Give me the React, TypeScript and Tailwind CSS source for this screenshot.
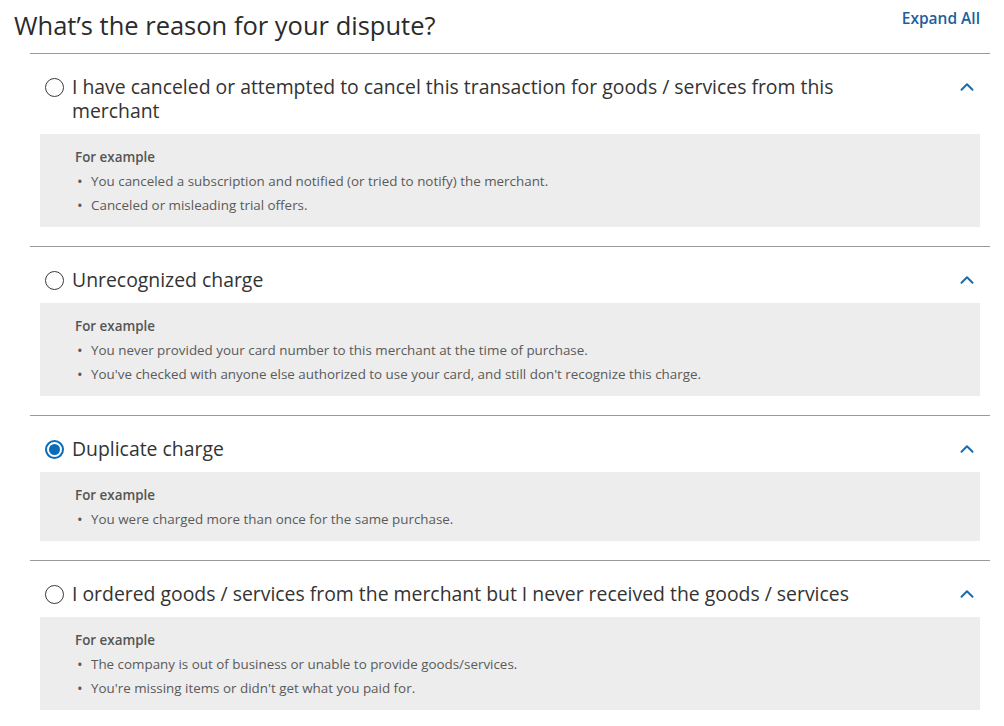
import { ChevronUp } from "lucide-react";

const reasons = [
  {
    title:
      "I have canceled or attempted to cancel this transaction for goods / services from this merchant",
    examples: [
      "You canceled a subscription and notified (or tried to notify) the merchant.",
      "Canceled or misleading trial offers.",
    ],
  },
  {
    title: "Unrecognized charge",
    examples: [
      "You never provided your card number to this merchant at the time of purchase.",
      "You've checked with anyone else authorized to use your card, and still don't recognize this charge.",
    ],
  },
  {
    title: "Duplicate charge",
    selected: true,
    examples: ["You were charged more than once for the same purchase."],
  },
  {
    title: "I ordered goods / services from the merchant but I never received the goods / services",
    examples: [
      "The company is out of business or unable to provide goods/services.",
      "You're missing items or didn't get what you paid for.",
    ],
  },
];

export default function App() {
  return (
    <div className="h-screen overflow-hidden bg-white font-['Open_Sans',sans-serif] text-[#333]">
      {/* Header */}
      <div className="flex items-start justify-between pl-[14px] pr-[24px] pt-[9px]">
        <h1 className="text-[25.5px] leading-[32px] text-[#2b2b2b]">What’s the reason for your dispute?</h1>
        <button className="-mt-[2px] text-[15.5px] font-semibold text-[#1b5f9e]">Expand All</button>
      </div>

      <div className="ml-[30px] mr-[14px] mt-[12px] border-t border-[#9a9a9a]">
        {reasons.map((r, i) => (
          <div key={i} className="border-b border-[#9a9a9a] pt-[21px] pb-[19px]">
            <div className="flex items-start pl-[15px] pr-[12px]">
              <span className="mt-[3px] flex h-[19px] w-[19px] shrink-0 items-center justify-center rounded-full">
                {r.selected ? (
                  <span className="flex h-[19px] w-[19px] items-center justify-center rounded-full border-2 border-[#0b6cb8]">
                    <span className="h-[11px] w-[11px] rounded-full bg-[#0b6cb8]" />
                  </span>
                ) : (
                  <span className="h-[19px] w-[19px] rounded-full border-[1.5px] border-[#3a3a3a]" />
                )}
              </span>
              <p className="ml-[8px] max-w-[800px] text-[19.4px] leading-[24px] text-[#333]">{r.title}</p>
              <ChevronUp className="mt-[1px] ml-auto h-[22px] w-[22px] shrink-0 text-[#1a6db0]" strokeWidth={2.2} />
            </div>
            <div className="mx-[10px] mt-[11px] bg-[#ededed] pt-[11px] pb-[10px] pl-[35px]">
              <p className="text-[13.4px] font-semibold leading-[24px] text-[#555]">For example</p>
              <ul>
                {r.examples.map((e, j) => (
                  <li key={j} className="flex text-[13.4px] leading-[24px] text-[#5a5a5a]">
                    <span className="w-[16px] pl-[2px] text-[15px]">•</span>
                    <span>{e}</span>
                  </li>
                ))}
              </ul>
            </div>
          </div>
        ))}
      </div>
    </div>
  );
}
